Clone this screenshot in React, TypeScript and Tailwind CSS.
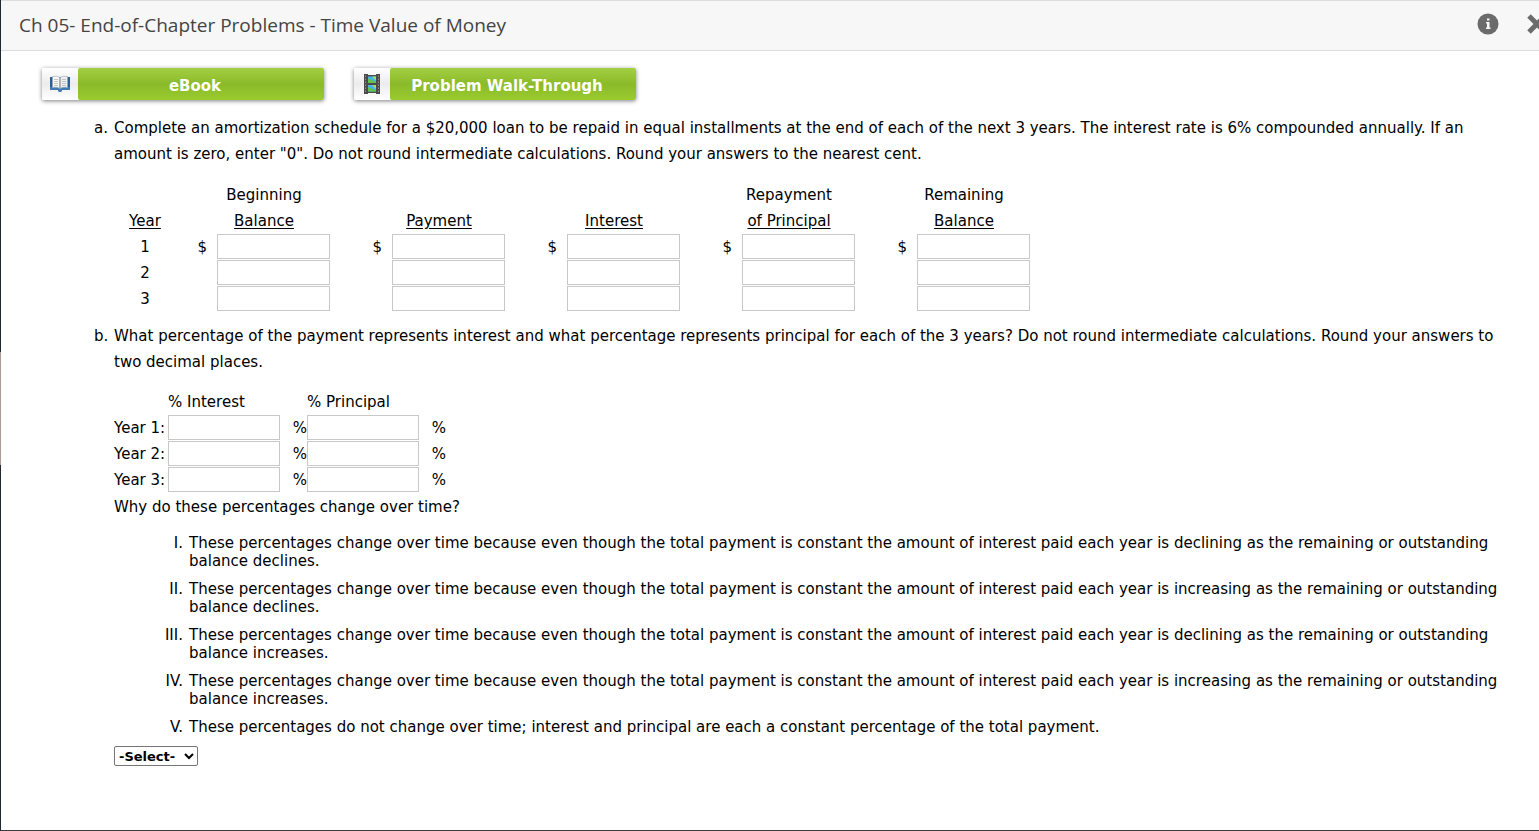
import type { ReactNode } from 'react';

const YEARS = [1, 2, 3];

const SCHEDULE_COLUMNS = [
  { top: 'Beginning', bottom: 'Balance' },
  { top: '', bottom: 'Payment' },
  { top: '', bottom: 'Interest' },
  { top: 'Repayment', bottom: 'of Principal' },
  { top: 'Remaining', bottom: 'Balance' },
];

const REASON =
  'These percentages change over time because even though the total payment is constant the amount of interest paid each year is';

const CHOICES = [
  { numeral: 'I', text: `${REASON} declining as the remaining or outstanding balance declines.` },
  { numeral: 'II', text: `${REASON} increasing as the remaining or outstanding balance declines.` },
  { numeral: 'III', text: `${REASON} declining as the remaining or outstanding balance increases.` },
  { numeral: 'IV', text: `${REASON} increasing as the remaining or outstanding balance increases.` },
  {
    numeral: 'V',
    text: 'These percentages do not change over time; interest and principal are each a constant percentage of the total payment.',
  },
];

function BookIcon() {
  return (
    <svg width="22" height="18" viewBox="0 0 22 18" aria-hidden="true">
      <path d="M1 2h20v13h-8l-1 2h-2l-1-2H1z" fill="#2c5f98" />
      <path d="M1 12h20v3h-8l-1 2h-2l-1-2H1z" fill="#3f7ab3" />
      <path d="M3.500 1.500Q8 .5 11 2.500V13.500Q8 11.500 3.500 12.500z" fill="#f8f8f6" stroke="#8ea4ba" strokeWidth=".6" />
      <path d="M18.500 1.500Q14 .5 11 2.500V13.500q3-2 7.500-1z" fill="#efefec" stroke="#8ea4ba" strokeWidth=".6" />
      <path d="M5 4.500h4M5 6.500h4M5 8.500h4M5 10.500h4M13 4.500h4M13 6.500h4M13 8.500h4M13 10.500h4" stroke="#c4c4c0" />
      <path d="M11 2.500v11" stroke="#8a8f96" />
    </svg>
  );
}

function FilmIcon() {
  return (
    <svg width="16" height="20" viewBox="0 0 16 20" aria-hidden="true">
      <path d="M0 0h4v1h8V0h4v20h-4v-1H4v1H0z" fill="#4d4a4c" />
      <path d="M1.500 1.500v17M14.500 1.500v17" stroke="#8d8d8d" strokeDasharray="1.500 1.500" />
      <path d="M4 2.500h8V9H4zM4 11h8v6.500H4z" fill="#45b6e2" />
      <path d="M4 4.500 12 8v1H4zM4 13l8 3.500v1H4z" fill="#63c24a" />
      <path d="M8 2.500h4v4zM8 11h4v4z" fill="#a6dc68" />
    </svg>
  );
}

function ResourceButton({ icon, label }: { icon: ReactNode; label: string }) {
  return (
    <button
      type="button"
      className="flex h-8 w-[282px] overflow-hidden rounded-xs font-bold text-white shadow-[0_1px_4px_rgba(0,0,0,0.5)]"
    >
      <span className="flex h-full w-9 items-center justify-center bg-linear-to-b from-white via-[#ececec] to-white">
        {icon}
      </span>
      <span className="flex h-full flex-1 items-center justify-center rounded-l-xs bg-linear-to-b from-[#a4d043] via-[#8aba29] to-[#9acb2f] pr-3 pt-1 text-[15px]">
        {label}
      </span>
    </button>
  );
}

function AnswerInput({ label }: { label: string }) {
  return (
    <input type="text" aria-label={label} className="block h-[25px] w-full border border-[#c8c8c8] bg-white px-1" />
  );
}

function ScheduleTable() {
  return (
    <table className="table-fixed w-[937px] leading-[26px]">
      <colgroup>
        <col className="w-[62px]" />
        {SCHEDULE_COLUMNS.map((_, i) => [
          <col key={`sign-${i}`} className="w-[41px]" />,
          <col key={`input-${i}`} className="w-[134px]" />,
        ])}
      </colgroup>
      <thead>
        <tr>
          <th className="h-[52px] p-0 align-bottom font-normal underline underline-offset-2">Year</th>
          {SCHEDULE_COLUMNS.map((column, i) => [
            <td key={`sign-${i}`} />,
            <th key={`head-${i}`} className="p-0 pr-10 align-bottom font-normal whitespace-nowrap">
              {column.top && <span className="block">{column.top}</span>}
              <span className="block underline underline-offset-2">{column.bottom}</span>
            </th>,
          ])}
        </tr>
      </thead>
      <tbody>
        {YEARS.map((year) => (
          <tr key={year} className="h-[26px]">
            <th className="p-0 font-normal">{year}</th>
            {SCHEDULE_COLUMNS.map((column, i) => [
              <td key={`sign-${i}`} className="p-0 pr-2.5 text-right">{year === 1 ? '$' : ''}</td>,
              <td key={`input-${i}`} className="p-0 pr-[21px] align-top">
                <AnswerInput label={`${column.top} ${column.bottom}, year ${year}`.trim()} />
              </td>,
            ])}
          </tr>
        ))}
      </tbody>
    </table>
  );
}

function PercentTable() {
  return (
    <table className="table-fixed w-[332px] leading-[26px] whitespace-nowrap">
      <colgroup>
        <col className="w-[54px]" />
        <col className="w-28" />
        <col className="w-[27px]" />
        <col className="w-28" />
        <col className="w-[27px]" />
      </colgroup>
      <thead>
        <tr>
          <td />
          <th className="p-0 text-left font-normal">% Interest</th>
          <td />
          <th className="p-0 text-left font-normal">% Principal</th>
          <td />
        </tr>
      </thead>
      <tbody>
        {YEARS.map((year) => (
          <tr key={year} className="h-[26px]">
            <th className="p-0 text-left font-normal">Year {year}:</th>
            <td className="p-0 align-top">
              <AnswerInput label={`Percent interest, year ${year}`} />
            </td>
            <td className="p-0 text-right">%</td>
            <td className="p-0 align-top">
              <AnswerInput label={`Percent principal, year ${year}`} />
            </td>
            <td className="p-0 text-right">%</td>
          </tr>
        ))}
      </tbody>
    </table>
  );
}

function Question({ marker, children }: { marker: string; children: ReactNode }) {
  return (
    <li className="flex">
      <span className="w-5 shrink-0 leading-[26px]">{marker}</span>
      <div className="min-w-0 flex-1">{children}</div>
    </li>
  );
}

export default function App() {
  return (
    <div className="min-h-screen overflow-hidden bg-[linear-gradient(to_bottom,#23272e_352px,#a89c94_352px,#a89c94_465px,#23272e_465px)] pl-px font-['Verdana','DejaVu_Sans',sans-serif] text-[15px] text-black">
      <div className="flex min-h-screen flex-col border-b border-[#3c3c3c] bg-white">
        <header className="flex h-[51px] items-center justify-between border-y border-[#dddddd] bg-[#f7f7f7] pl-[18px]">
          <h1 className="font-['Open_Sans',sans-serif] text-[19px] text-[#444444]">
            Ch 05- End-of-Chapter Problems - Time Value of Money
          </h1>
          <div className="-mr-2 flex items-center gap-7 pb-1 text-[#6b6b6b]">
            <button type="button" aria-label="Information">
              <svg width="22" height="22" viewBox="0 0 22 22" aria-hidden="true">
                <circle cx="11" cy="11" r="10.500" fill="currentColor" />
                <path d="M10 5.500h2.500v2H10zM9 9h3.500v5.500h1V16H9v-1.500h1v-4H9z" fill="#f7f7f7" />
              </svg>
            </button>
            <button type="button" aria-label="Close">
              <svg width="20" height="20" viewBox="0 0 20 20" aria-hidden="true">
                <path d="m2 2 16 16M18 2 2 18" stroke="currentColor" strokeWidth="5" />
              </svg>
            </button>
          </div>
        </header>

        <main className="pt-[17px] pr-5 pb-12 pl-[41px]">
          <div className="flex gap-[30px]">
            <ResourceButton icon={<BookIcon />} label="eBook" />
            <ResourceButton icon={<FilmIcon />} label="Problem Walk-Through" />
          </div>

          <ol className="mt-[15px] ml-[52px]">
            <Question marker="a.">
              <p className="leading-[26px]">
                Complete an amortization schedule for a $20,000 loan to be repaid in equal installments at the end of
                each of the next 3 years. The interest rate is 6% compounded annually. If an amount is zero, enter
                "0". Do not round intermediate calculations. Round your answers to the nearest cent.
              </p>
              <div className="mt-[15px] mb-[11px]">
                <ScheduleTable />
              </div>
            </Question>
            <Question marker="b.">
              <p className="leading-[26px]">
                What percentage of the payment represents interest and what percentage represents principal for each
                of the 3 years? Do not round intermediate calculations. Round your answers to two decimal places.
              </p>
              <div className="mt-3.5 mb-px">
                <PercentTable />
              </div>
              <p id="why" className="leading-[26px]">Why do these percentages change over time?</p>
              <ol className="mt-3.5 flex flex-col gap-2.5 leading-[18px]">
                {CHOICES.map((choice) => (
                  <li key={choice.numeral} className="flex">
                    <span className="w-[69px] shrink-0 text-right">{choice.numeral}.</span>
                    <span className="ml-1.5 flex-1">{choice.text}</span>
                  </li>
                ))}
              </ol>
              <select
                aria-labelledby="why"
                className="mt-2.5 block h-5 w-[84px] rounded-xs border border-[#767676] bg-white text-[13px] font-bold"
              >
                <option>-Select-</option>
                {CHOICES.map((choice) => (
                  <option key={choice.numeral}>{choice.numeral}</option>
                ))}
              </select>
            </Question>
          </ol>
        </main>
      </div>
    </div>
  );
}
